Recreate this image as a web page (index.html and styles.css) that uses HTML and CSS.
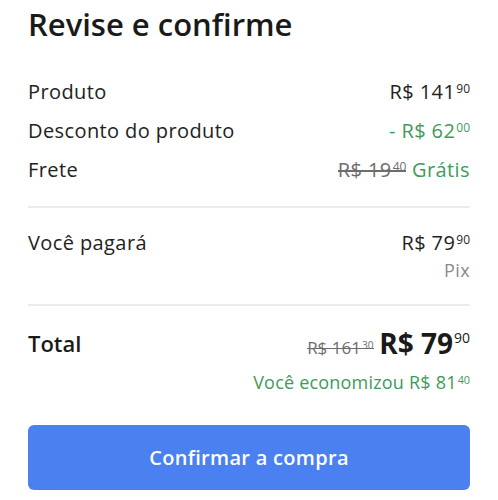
FILE: index.html
```html
<!DOCTYPE html>
<html lang="pt-BR">
<head>
<meta charset="utf-8">
<link rel="stylesheet" href="styles.css">
</head>
<body>
<main class="page">
  <h1 class="title">Revise e confirme</h1>
  <section class="group first">
    <div class="row"><span class="label">Produto</span><span class="price">R$ 141<sup>90</sup></span></div>
    <div class="row"><span class="label">Desconto do produto</span><span class="price green">- R$ 62<sup>00</sup></span></div>
    <div class="row"><span class="label">Frete</span><span class="price"><s class="old">R$ 19<sup>40</sup></s> <span class="green">Grátis</span></span></div>
  </section>
  <section class="group pay">
    <div class="row top"><span class="label">Você pagará</span>
      <div class="right"><span class="price">R$ 79<sup>90</sup></span><span class="method">Pix</span></div>
    </div>
  </section>
  <section class="group total">
    <div class="row top"><span class="label strong">Total</span>
      <div class="right"><span class="price totalprice"><s class="old small">R$ 161<sup>30</sup></s> <span class="big">R$ 79<sup>90</sup></span></span><span class="saved">Você economizou R$ 81<sup>40</sup></span></div>
    </div>
  </section>
  <button class="cta">Confirmar a compra</button>
</main>
</body>
</html>
```
FILE: styles.css
```css
* { box-sizing: border-box; }
html, body { margin: 0; padding: 0; background: #fff; }
body { font-family: "Open Sans", Lato, sans-serif; color: #1f1f1f; }
.page { padding: 0 28px; display: flex; flex-direction: column; }
.title { margin: 0; font-size: 31px; font-weight: 600; line-height: 36px; padding-top: 6px; color: #1a1a1a; }
.group { display: flex; flex-direction: column; border-bottom: 2px solid #ebebeb; }
.group.first { padding-top: 37px; padding-bottom: 23px; gap: 13px; }
.row { display: flex; justify-content: space-between; align-items: center; font-size: 20px; line-height: 26px; letter-spacing: 0.4px; }
.row.top { align-items: flex-start; }
.label { color: #222; }
.strong { font-weight: 600; font-size: 22px; line-height: 34px; color: #1a1a1a; letter-spacing: 0; }
.price { color: #1f1f1f; white-space: nowrap; }
sup { font-size: 0.6em; vertical-align: 0.48em; line-height: 0; margin-left: 1px; letter-spacing: 0; }
.green { color: #3f9a5c; }
.old { color: #6d6d6d; text-decoration: none; position: relative; }
.old::after { content: ""; position: absolute; left: 0; right: 0; top: 52%; height: 1.5px; background: currentColor; }
.right { display: flex; flex-direction: column; align-items: flex-end; }
.method { color: #8a8a8a; font-size: 18px; line-height: 22px; margin-top: 3px; }
.group.pay { padding-top: 22px; padding-bottom: 23px; }
.group.total { padding-top: 20px; padding-bottom: 0; border-bottom: none; }
.totalprice { line-height: 34px; }
.old.small { font-size: 17px; letter-spacing: 0; }
.big { font-size: 28px; font-weight: 700; color: #1a1a1a; letter-spacing: 0; }
.big sup { font-weight: 400; font-size: 0.5em; vertical-align: 0.8em; }
.saved { color: #3f9a5c; font-size: 18px; line-height: 22px; margin-top: 6px; letter-spacing: 0.2px; }
.cta { margin-top: 32px; height: 65px; border: none; border-radius: 6px; background: #4a80ef; color: #fff; font-family: inherit; font-size: 20px; font-weight: 600; letter-spacing: 0.3px; }
```
